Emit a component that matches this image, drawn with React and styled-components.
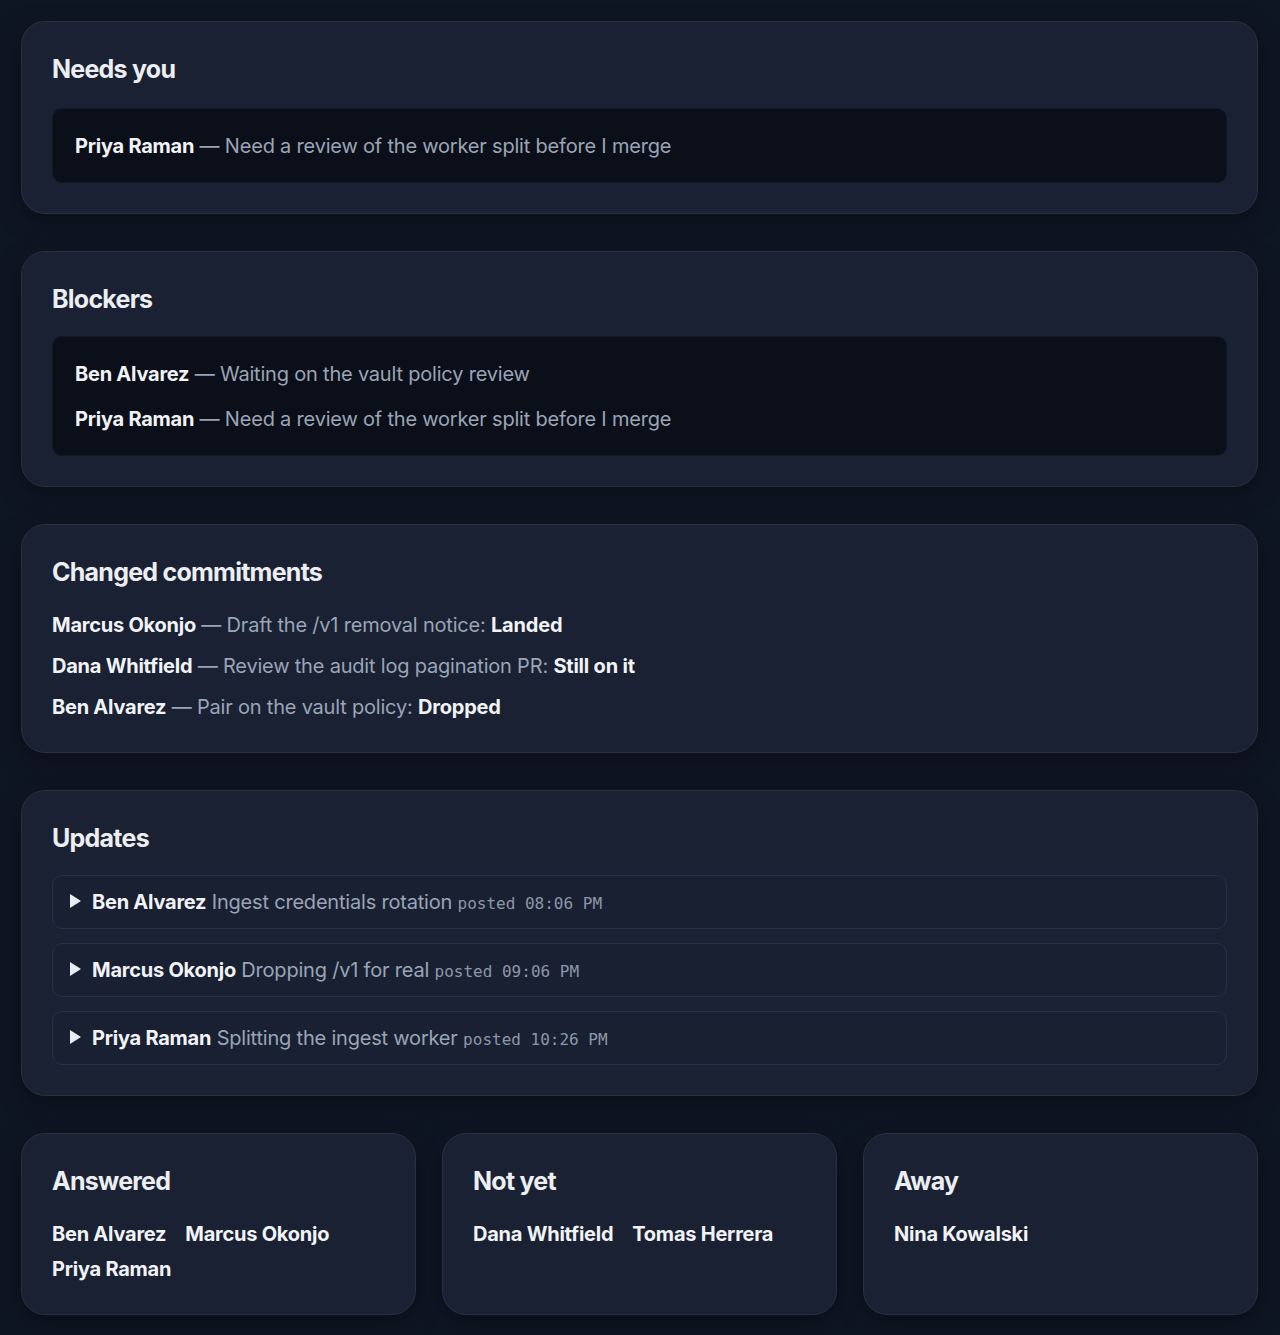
import React from "react";
import styled, { createGlobalStyle } from "styled-components";

const GlobalStyle = createGlobalStyle`
  html, body {
    margin: 0;
    padding: 0;
    background: #0f1623;
  }
  body {
    font-family: Inter, "Noto Sans", "Liberation Sans", sans-serif;
    color: #e9ecf1;
    -webkit-font-smoothing: antialiased;
  }
`;

const Page = styled.main`
  display: flex;
  flex-direction: column;
  gap: 37px;
  padding: 21px 22px 21px 21px;
`;

const Card = styled.section`
  background: #192133;
  border: 1px solid #283144;
  border-radius: 24px;
  padding: 30px;
  box-shadow: 0 8px 24px rgba(0, 0, 0, 0.35);
`;

const Title = styled.h2`
  margin: 0 0 ${(p) => p.$gap || 21}px;
  font-size: 25px;
  line-height: 34px;
  font-weight: 700;
  letter-spacing: -0.03em;
  color: #eceef2;
`;

const Inset = styled.div`
  background: #0b0f19;
  border: 1px solid #111827;
  border-radius: 10px;
  padding: 22px 22px 21px;
  display: flex;
  flex-direction: column;
  gap: 15px;
`;

const Line = styled.div`
  font-size: 20px;
  line-height: 30px;
  color: #9aa5b6;
  letter-spacing: -0.01em;
`;

const List = styled.div`
  display: flex;
  flex-direction: column;
  gap: 11px;
`;

const Name = styled.strong`
  font-weight: 700;
  color: #f1f3f6;
  letter-spacing: -0.012em;
`;

const Status = styled.strong`
  font-weight: 700;
  color: #f1f3f6;
  letter-spacing: -0.01em;
`;

const Updates = styled.div`
  display: flex;
  flex-direction: column;
  gap: 14px;
`;

const Update = styled.details`
  border: 1px solid #283144;
  border-radius: 10px;
  background: #182032;
`;

const Summary = styled.summary`
  cursor: pointer;
  list-style: none;
  display: block;
  padding: 11px 17px;
  height: 30px;
  font-size: 20px;
  line-height: 30px;
  color: #9aa5b6;
  letter-spacing: -0.01em;
  white-space: nowrap;
  &::-webkit-details-marker {
    display: none;
  }
  &::before {
    content: "";
    display: inline-block;
    vertical-align: 1px;
    width: 0;
    height: 0;
    border-left: 11px solid #e9ecf1;
    border-top: 7px solid transparent;
    border-bottom: 7px solid transparent;
    margin-right: 11px;
  }
`;

const Time = styled.span`
  font-family: "DejaVu Sans Mono", "Liberation Mono", monospace;
  font-size: 16px;
  line-height: 1;
  color: #8d97a8;
  letter-spacing: 0;
`;

const Row = styled.div`
  display: grid;
  grid-template-columns: repeat(3, 1fr);
  gap: 26px;
`;

const Names = styled.div`
  display: flex;
  flex-wrap: wrap;
  column-gap: 19px;
  row-gap: 5px;
  font-size: 20px;
  line-height: 30px;
`;

const needsYou = [{ name: "Priya Raman", text: "Need a review of the worker split before I merge" }];

const blockers = [
  { name: "Ben Alvarez", text: "Waiting on the vault policy review" },
  { name: "Priya Raman", text: "Need a review of the worker split before I merge" },
];

const commitments = [
  { name: "Marcus Okonjo", text: "Draft the /v1 removal notice", status: "Landed" },
  { name: "Dana Whitfield", text: "Review the audit log pagination PR", status: "Still on it" },
  { name: "Ben Alvarez", text: "Pair on the vault policy", status: "Dropped" },
];

const updates = [
  { name: "Ben Alvarez", title: "Ingest credentials rotation", time: "08:06 PM" },
  { name: "Marcus Okonjo", title: "Dropping /v1 for real", time: "09:06 PM" },
  { name: "Priya Raman", title: "Splitting the ingest worker", time: "10:26 PM" },
];

const groups = [
  { title: "Answered", names: ["Ben Alvarez", "Marcus Okonjo", "Priya Raman"] },
  { title: "Not yet", names: ["Dana Whitfield", "Tomas Herrera"] },
  { title: "Away", names: ["Nina Kowalski"] },
];

function NoteBox({ items }) {
  return (
    <Inset>
      {items.map((item, i) => (
        <Line key={i}>
          <Name>{item.name}</Name> — {item.text}
        </Line>
      ))}
    </Inset>
  );
}

export default function App() {
  return (
    <>
      <GlobalStyle />
      <Page>
        <Card>
          <Title $gap={22}>Needs you</Title>
          <NoteBox items={needsYou} />
        </Card>

        <Card>
          <Title $gap={20}>Blockers</Title>
          <NoteBox items={blockers} />
        </Card>

        <Card>
          <Title $gap={21}>Changed commitments</Title>
          <List>
            {commitments.map((c, i) => (
              <Line key={i}>
                <Name>{c.name}</Name> — {c.text}: <Status>{c.status}</Status>
              </Line>
            ))}
          </List>
        </Card>

        <Card>
          <Title $gap={20}>Updates</Title>
          <Updates>
            {updates.map((u, i) => (
              <Update key={i}>
                <Summary>
                  <Name>{u.name}</Name> {u.title} <Time>posted {u.time}</Time>
                </Summary>
              </Update>
            ))}
          </Updates>
        </Card>

        <Row>
          {groups.map((g) => (
            <Card key={g.title}>
              <Title $gap={21}>{g.title}</Title>
              <Names>
                {g.names.map((n) => (
                  <Name key={n}>{n}</Name>
                ))}
              </Names>
            </Card>
          ))}
        </Row>
      </Page>
    </>
  );
}
